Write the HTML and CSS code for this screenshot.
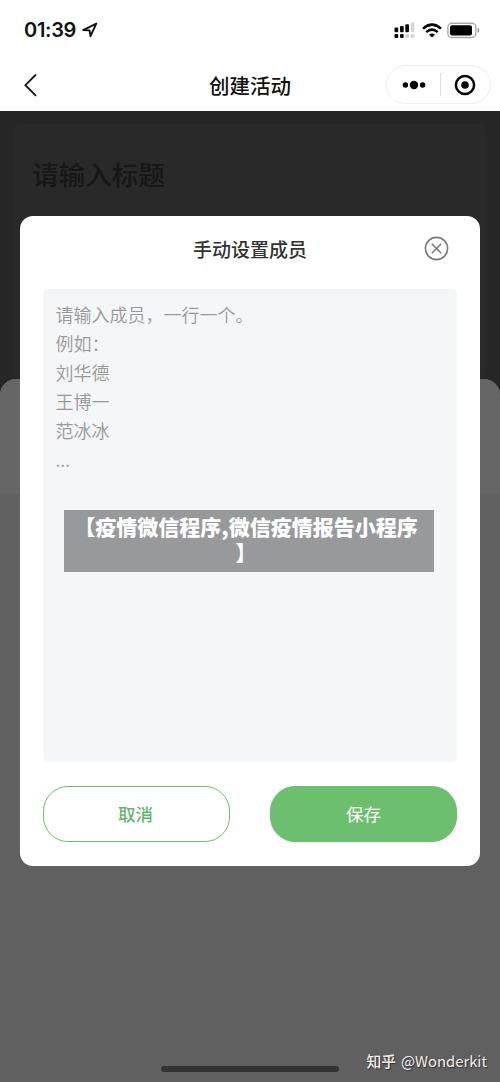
FILE: index.html
```html
<!DOCTYPE html>
<html lang="zh-CN">
<head>
<meta charset="utf-8">
<meta name="viewport" content="width=device-width, initial-scale=1">
<title>创建活动</title>
<link rel="stylesheet" href="styles.css">
</head>
<body>
<div class="phone">
  <header class="top">
    <div class="status">
      <div class="clock">
        <span class="time">01:39</span>
        <svg class="locate" width="16" height="16" viewBox="0 0 16 16"><path d="M1.2 8.1 14.3 1.6 8.5 14.2 7.5 8.4Z" fill="none" stroke="#111" stroke-width="1.9" stroke-linejoin="round"/></svg>
      </div>
      <div class="indicators">
        <svg width="21" height="17" viewBox="0 0 21 17">
          <g fill="#080808"><rect x=".5" y="5.5" width="3.7" height="4.8" rx="1"/><rect x="6" y="4" width="3.7" height="6.3" rx="1"/><rect x="11.3" y="2.2" width="3.7" height="8.1" rx="1"/><rect x=".5" y="12" width="3.7" height="4" rx="1"/><rect x="6" y="12" width="3.7" height="4" rx="1"/></g>
          <g fill="#d4d4d4"><rect x="16.7" y=".5" width="3.7" height="9.8" rx="1"/><rect x="11.3" y="12" width="3.7" height="4" rx="1"/><rect x="16.7" y="12" width="3.7" height="4" rx="1"/></g>
        </svg>
        <svg class="wifi" width="20" height="15" viewBox="0 0 20 15"><g fill="none" stroke="#080808" stroke-width="2.5"><path d="M1 5.6Q10-2.4 19 5.6"/><path d="M4.3 9.1Q10 4.1 15.7 9.1"/></g><path d="M7 11.7Q10 9.2 13 11.7L10 14.6Z" fill="#080808"/></svg>
        <svg class="battery" width="33" height="17" viewBox="0 0 33 17"><rect x=".9" y="1.2" width="28" height="14.3" rx="4" fill="none" stroke="#a9a9a9" stroke-width="1.4"/><rect x="3" y="3.3" width="22" height="10.1" rx="2" fill="#000"/><path d="M30.6 5.8Q32.4 6.2 32.4 8.3T30.6 10.8Z" fill="#999"/></svg>
      </div>
    </div>
    <nav class="nav">
      <svg class="back" width="14" height="24" viewBox="0 0 14 24"><path d="M12 1.5 1.4 12.2 12 22.8" fill="none" stroke="#151515" stroke-width="1.8"/></svg>
      <h1 class="nav-title">创建活动</h1>
      <div class="capsule">
        <svg width="24" height="10" viewBox="0 0 24 10"><circle cx="3.4" cy="5" r="2.7"/><circle cx="12" cy="5" r="4.2"/><circle cx="20.6" cy="5" r="2.7"/></svg>
        <span class="split"></span>
        <svg width="22" height="22" viewBox="0 0 22 22"><circle cx="11" cy="11" r="9.1" fill="none" stroke="#050505" stroke-width="2.5"/><circle cx="11" cy="11" r="3.8" fill="#050505"/></svg>
      </div>
    </nav>
  </header>
  <main class="backdrop">
    <div class="hero"><div class="title-card">请输入标题</div></div>
    <div class="sheet"><div class="sheet-head"></div></div>
  </main>
  <section class="modal">
    <div class="modal-head">
      <h2 class="modal-title">手动设置成员</h2>
      <svg class="close" width="25" height="25" viewBox="0 0 25 25"><g fill="none" stroke="#7b7b7b"><circle cx="12.5" cy="12.5" r="11.1" stroke-width="1.6"/><path d="M7.8 7.8 17.2 17.2M17.2 7.8 7.8 17.2" stroke-width="1.6"/></g></svg>
    </div>
    <div class="field">请输入成员，一行一个。<br>例如：<br>刘华德<br>王博一<br>范冰冰<br>...</div>
    <div class="actions">
      <button class="btn cancel">取消</button>
      <button class="btn save">保存</button>
    </div>
  </section>
  <div class="caption">【疫情微信程序,微信疫情报告小程序】</div>
  <div class="home-bar"></div>
  <div class="credit"><span class="brand">知乎</span><span>@Wonderkit</span></div>
</div>
</body>
</html>
```

FILE: styles.css
```css
* { box-sizing: border-box; }
body { margin: 0; font-family: "Noto Sans CJK SC", sans-serif; }
h1, h2 { margin: 0; }
svg { display: block; flex: none; }
.phone { position: relative; display: flex; flex-direction: column; width: 500px; height: 1082px; overflow: hidden; background: #606060; }
.top { height: 111px; background: #fff; }
.status { display: flex; justify-content: space-between; height: 60px; padding: 0 20px 0 24px; align-items: center; }
.clock { display: flex; align-items: center; gap: 5px; color: #111; }
.time { font: 600 20px/24px Inter, sans-serif; width: 53px; letter-spacing: -0.3px; white-space: nowrap; }
.indicators { display: flex; align-items: center; gap: 7px; padding-top: 1px; }
.battery { margin-left: -2px; }
.nav { display: grid; grid-template-columns: 105px 1fr 105px; align-items: center; height: 49px; padding: 0 9px 0 24px; }
.nav-title { justify-self: center; margin-right: 15px; font-size: 20.5px; line-height: 30px; font-weight: 500; color: #111; }
.capsule { display: flex; align-items: center; width: 105px; height: 39px; padding: 0 14px 0 15px; border: 1px solid #eee; border-radius: 20px; justify-content: space-between; }
.split { width: 1px; height: 23px; background: #ddd; }
.backdrop { flex: 1; display: flex; flex-direction: column; background: #262626; }
.hero { height: 268px; padding: 13px; }
.title-card { height: 255px; padding: 30px 19px; border-radius: 8px; background: #292929; color: #171717; font-size: 26.6px; line-height: 40px; font-weight: 500; }
.sheet { flex: 1; background: #606060; border-radius: 16px 16px 0 0; overflow: hidden; }
.sheet-head { height: 115px; background: #666; }
.modal { position: absolute; left: 20px; top: 216px; width: 460px; height: 650px; padding: 0 23px; border-radius: 13px; background: #fff; }
.modal-head { display: grid; grid-template-columns: 1fr auto 1fr; align-items: center; height: 73px; padding: 0 8px 8px; }
.modal-title { grid-column: 2; font-size: 19px; line-height: 28px; font-weight: 500; color: #333; }
.close { justify-self: end; }
.field { height: 473px; padding: 11px 12.5px; border-radius: 5px; background: #f5f6f8; color: #999; font-size: 18px; line-height: 29px; font-weight: 350; }
.actions { display: flex; justify-content: space-between; margin-top: 24px; }
.btn { width: 187px; height: 56px; padding: 0; border: 1.5px solid #6dbf70; border-radius: 25px; font: 400 17.5px/26px "Noto Sans CJK SC", sans-serif; }
.cancel { background: #fff; color: #65b76b; font-weight: 500; padding-right: 2px; }
.save { background: #6dbf70; color: #fff; }
.caption { position: absolute; left: 64px; top: 510px; width: 370px; height: 62px; padding: 3px 13px 0 7px; background: #98999b; color: #fff; font-size: 21px; line-height: 26px; font-weight: 900; text-align: center; line-break: anywhere; }
.home-bar { position: absolute; left: 161px; top: 1066px; width: 178px; height: 6px; border-radius: 3px; background: #333; }
.credit { position: absolute; right: 13px; top: 1050px; display: flex; gap: 5px; color: #eee; font-size: 14.8px; line-height: 22px; text-shadow: 1px 1px 1px #333; white-space: nowrap; }
.brand { font-weight: 500; }
```
